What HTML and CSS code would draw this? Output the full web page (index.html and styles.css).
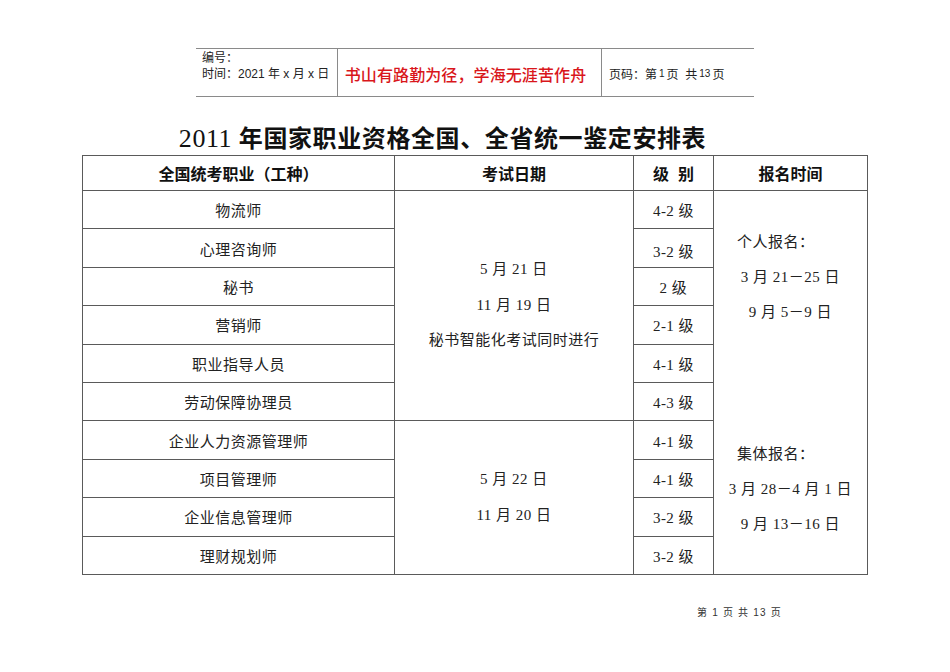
FILE: index.html
```html
<!DOCTYPE html>
<html lang="zh">
<head>
<meta charset="utf-8">
<title>2011年国家职业资格全国、全省统一鉴定安排表</title>
<link rel="stylesheet" href="styles.css">
</head>
<body>
<div class="page">
  <div class="doc-head">
    <div class="dh-left">
      <div>编号：</div>
      <div>时间：2021 年 x 月 x 日</div>
    </div>
    <div class="dh-mid">书山有路勤为径，学海无涯苦作舟</div>
    <div class="dh-right">页码：第<span class="sm">1</span>页 &nbsp;共<span class="sm">13</span>页</div>
  </div>

  <h1 class="title"><span class="yr">2011</span> 年国家职业资格全国、全省统一鉴定安排表</h1>

  <table class="sched">
    <colgroup>
      <col class="c1"><col class="c2"><col class="c3"><col class="c4">
    </colgroup>
    <thead>
      <tr class="hrow">
        <th>全国统考职业（工种）</th>
        <th>考试日期</th>
        <th>级&nbsp;&nbsp;别</th>
        <th>报名时间</th>
      </tr>
    </thead>
    <tbody>
      <tr>
        <td>物流师</td>
        <td rowspan="6" class="dates">
          <p>5 月 21 日</p>
          <p>11 月 19 日</p>
          <p>秘书智能化考试同时进行</p>
        </td>
        <td>4-2 级</td>
        <td rowspan="10" class="signup">
          <div class="sg-block sg-first">
            <p class="sg-label">个人报名：</p>
            <p>3 月 21－25 日</p>
            <p>9 月 5－9 日</p>
          </div>
          <div class="sg-block sg-second">
            <p class="sg-label">集体报名：</p>
            <p>3 月 28－4 月 1 日</p>
            <p>9 月 13－16 日</p>
          </div>
        </td>
      </tr>
      <tr><td>心理咨询师</td><td class="lv-low">3-2 级</td></tr>
      <tr><td>秘书</td><td>2 级</td></tr>
      <tr><td>营销师</td><td>2-1 级</td></tr>
      <tr><td>职业指导人员</td><td>4-1 级</td></tr>
      <tr><td>劳动保障协理员</td><td>4-3 级</td></tr>
      <tr>
        <td>企业人力资源管理师</td>
        <td rowspan="4" class="dates">
          <p>5 月 22 日</p>
          <p>11 月 20 日</p>
        </td>
        <td>4-1 级</td>
      </tr>
      <tr><td>项目管理师</td><td>4-1 级</td></tr>
      <tr><td>企业信息管理师</td><td>3-2 级</td></tr>
      <tr><td>理财规划师</td><td>3-2 级</td></tr>
    </tbody>
  </table>

  <div class="foot">第 1 页 共 13 页</div>
</div>
</body>
</html>
```

FILE: styles.css
```css
html, body {
  margin: 0;
  padding: 0;
  background: #ffffff;
}

.page {
  width: 950px;
  height: 672px;
  padding-top: 48px;
  box-sizing: border-box;
  color: #1a1a1a;
  font-family: "Liberation Serif", "Noto Sans CJK SC", serif;
}

/* ---------- document header ---------- */
.doc-head {
  margin-left: 196px;
  width: 558px;
  height: 47px;
  border-top: 1px solid #8a8a8a;
  border-bottom: 1px solid #8a8a8a;
  display: grid;
  grid-template-columns: 141px 265px 152px;
  font-family: "Liberation Sans", "Noto Sans CJK SC", sans-serif;
}

.dh-left {
  font-size: 12px;
  line-height: 16px;
  padding: 1px 0 0 6px;
  color: #222;
}

.dh-mid {
  border-left: 1px solid #8a8a8a;
  border-right: 1px solid #8a8a8a;
  color: #d9161b;
  font-size: 16px;
  font-weight: 500;
  display: flex;
  align-items: center;
  justify-content: center;
  padding: 3px 8px 0 0;
  letter-spacing: 0.1px;
}

.dh-right {
  font-size: 12px;
  display: flex;
  align-items: center;
  padding: 2px 0 0 7px;
  color: #222;
}

.dh-right .sm {
  font-size: 10px;
  margin: 0 2px;
}

/* ---------- title ---------- */
.title {
  margin: 0 0 0 170px;
  width: 545px;
  height: 58px;
  box-sizing: border-box;
  padding-top: 25px;
  font-size: 24px;
  line-height: 33px;
  font-weight: bold;
  letter-spacing: 0.6px;
  text-align: center;
  white-space: nowrap;
  color: #111;
  font-family: "Liberation Serif", "Noto Sans CJK SC", serif;
}

.title .yr {
  font-weight: normal;
  font-size: 26px;
}

/* ---------- schedule table ---------- */
.sched {
  margin-left: 82px;
  width: 785px;
  border-collapse: collapse;
  table-layout: fixed;
  font-size: 15px;
}

.sched col.c1 { width: 312px; }
.sched col.c2 { width: 239px; }
.sched col.c3 { width: 80px; }
.sched col.c4 { width: 154px; }

.sched th,
.sched td {
  border: 1px solid #5a5a5a;
  padding: 0;
  text-align: center;
  vertical-align: middle;
}

.sched th {
  font-family: "Liberation Sans", "Noto Sans CJK SC", sans-serif;
  font-size: 16px;
  font-weight: bold;
  color: #111;
}

.sched tr.hrow { height: 35px; }
.sched tbody tr { height: 38.4px; }

.sched td {
  color: #222;
  letter-spacing: 0.5px;
}

.sched td.lv-low {
  padding-top: 5px;
}

.dates p {
  margin: 0;
  line-height: 35.5px;
}

.sched td.signup {
  vertical-align: top;
  padding-top: 34px;
}

.sg-block p {
  margin: 0;
  line-height: 35px;
  text-align: center;
}

.sg-block p.sg-label {
  text-align: left;
  padding-left: 23px;
}

.sg-second {
  margin-top: 107px;
}

/* ---------- footer ---------- */
.foot {
  margin: 29px 0 0 697px;
  font-size: 10px;
  letter-spacing: 1.2px;
  color: #333;
  font-family: "Liberation Sans", "Noto Sans CJK SC", sans-serif;
}
```
